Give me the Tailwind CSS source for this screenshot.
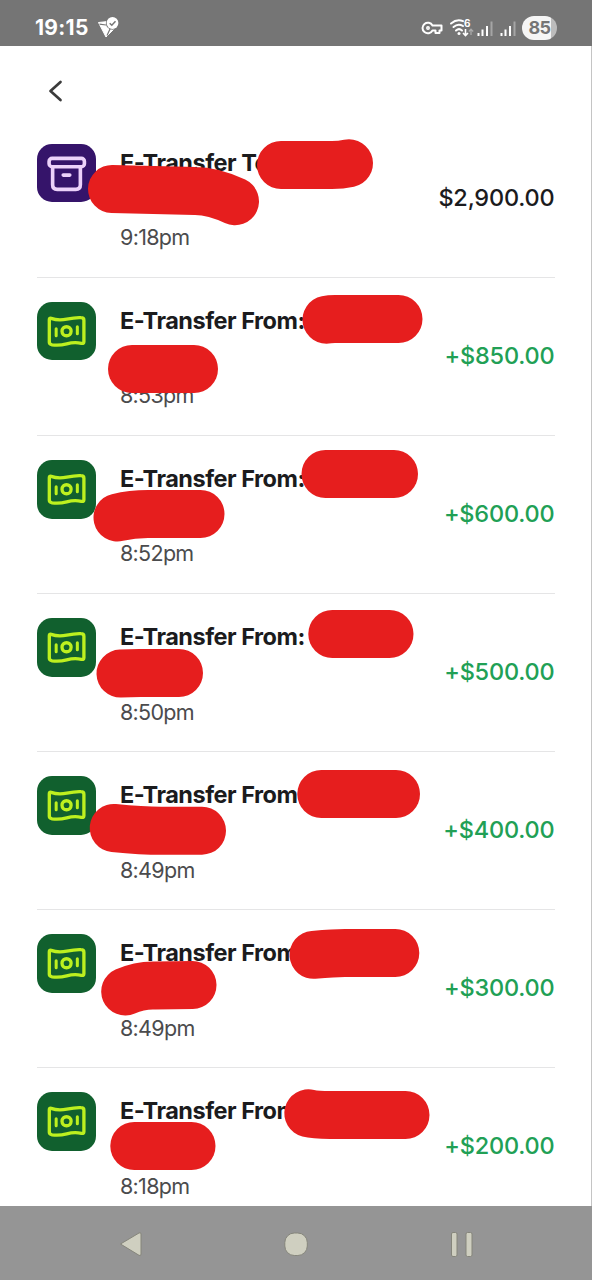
<!DOCTYPE html>
<html lang="en">
<head>
<meta charset="utf-8">
<title>Transactions</title>
<script src="https://cdn.jsdelivr.net/npm/@tailwindcss/browser@4"></script>
</head>
<body class="bg-white">
<svg class="hidden">
  <symbol id="cash" viewBox="0 0 58 58">
    <g fill="none" stroke="#bdf01f" stroke-width="3.3" stroke-linecap="round" stroke-linejoin="round">
      <path d="M14 16.2Q21 18.8 29.500 17T43.500 15.500Q46.500 15.500 46.500 18V39.500Q46.500 41.500 44 41Q37 39.500 29.500 41.500T15 42.500Q12.200 42 12.200 40V17.500Q12.200 15.600 14 16.200Z"/>
      <circle cx="29.300" cy="29" r="4.500"/>
      <path d="M19 26.500V33.500M40 24.500V31.500" stroke-width="3"/>
    </g>
  </symbol>
</svg>
<div class="relative flex h-[1280px] w-[592px] flex-col overflow-hidden bg-white font-[Inter,sans-serif]">
  <header class="flex h-[46px] shrink-0 items-center justify-between bg-[#757575] pt-[9px] pr-[35px] pb-0 pl-[35px]">
    <div class="flex items-center gap-[9px]">
      <span class="w-[53px] text-[21px] leading-[26px] font-bold tracking-[0.3px] whitespace-nowrap text-white">19:15</span>
      <svg class="h-[24px] w-[24px]" viewBox="0 0 24 24">
        <path d="M1.500 6.500L11 5.500L17 13L9 21Z" fill="#fff" stroke="#fff" stroke-width="1" stroke-linejoin="round"/>
        <path d="M2.500 8.200L9 9M10 19.500L13.500 12" fill="none" stroke="#757575" stroke-width="1.200"/>
        <circle cx="15.500" cy="7" r="6.700" fill="#757575"/>
        <circle cx="15.500" cy="7" r="5.900" fill="#fff"/>
        <path d="M12.700 7.200L14.800 9.200L18.500 5.300" fill="none" stroke="#757575" stroke-width="1.500"/>
      </svg>
    </div>
    <div class="flex items-center">
      <svg class="h-[26px] w-[102px]" viewBox="0 0 102 26">
        <g fill="none" stroke="#fff" stroke-width="2">
          <path d="M11.500 10.500A5.300 5.300 0 1 0 11.500 15.500H14.500V18H18.500V15.500H20.500V10.500Z" stroke-linejoin="round"/>
          <circle cx="7" cy="13" r="1.200" stroke-width="1.500"/>
          <g stroke-linecap="round">
            <path d="M30 8.500Q36 3.500 42 6.200M32.500 12Q37 8 42 11M35 15.500Q38 12.800 41 15.500"/>
          </g>
          <path d="M44.500 14V20M42 18L44.500 20.500L47 18" stroke-width="1.600"/>
          <path d="M50 20V14.500M47.800 16.500L50 14.200L52.200 16.500" stroke="#aaa" stroke-width="1.300"/>
        </g>
        <circle cx="38" cy="18.500" r="1.500" fill="#fff"/>
        <text x="43" y="11.500" font-size="10" font-weight="700" fill="#fff">6</text>
        <g fill="#fff">
          <path d="M56.500 18h2v3h-2zM60.500 14.500h2v6.500h-2zM65 11h2v10h-2zM79.500 18h2v3h-2zM83.500 14.500h2v6.500h-2zM88 11h2v10h-2z"/>
          <path d="M69.500 6.500h2v14.500h-2zM92.500 6.500h2v14.500h-2z" fill="#a5a5a5"/>
        </g>
      </svg>
      <div class="-ml-px flex h-[24px] w-[35px] items-center justify-center rounded-full bg-linear-to-r from-[#f5f5f5] from-84% to-[#bcbcbc] to-84% text-[18px] font-bold tracking-[-0.5px] text-[#757575]">85</div>
    </div>
  </header>

  <nav class="flex h-[73.600px] shrink-0 items-start px-[46px] pt-[33px]">
    <svg class="h-[24px] w-[20px]" viewBox="0 0 20 24"><path d="M14.500 3L4.500 12L14.500 21" fill="none" stroke="#3b3b3b" stroke-width="2.700" stroke-linecap="round" stroke-linejoin="round"/></svg>
  </nav>

  <main id="list" class="h-[1087px] shrink-0 overflow-hidden px-[37px]"></main>

  <svg class="absolute inset-0 h-[1280px] w-[592px]" viewBox="0 0 592 1280" fill="none" stroke="#e61e1e" stroke-width="48" stroke-linecap="round" stroke-linejoin="round">
    <path d="M281 165H332Q341 165 349 163.300"/>
    <path d="M112 189L195 191Q213 191 235 201.300"/>
    <path d="M326.500 319.700Q330 319 335 319H398.500"/>
    <path d="M132 369H194"/>
    <path d="M325.500 474H394"/>
    <path d="M117.500 517.500Q132 514 148 514H200.500"/>
    <path d="M332.300 634H389.500"/>
    <path d="M120.500 673.600L140 673H179"/>
    <path d="M321.300 794H396"/>
    <path d="M113.700 828Q145 831 165 830.700H202"/>
    <path d="M313.500 954.800Q335 953 345 953H395.300"/>
    <path d="M125.200 991.500Q140 985 155 985.500L192.500 985"/>
    <path d="M308.300 1113.300Q315 1115 330 1115H405.500"/>
    <path d="M134.300 1146H191.500"/>
  </svg>

  <footer class="absolute bottom-0 left-0 h-[74px] w-[592px] bg-[#959595]">
    <svg class="h-[74px] w-[592px]" viewBox="0 0 592 74" fill="#cfcfc0" stroke="#85857b" stroke-width="1" stroke-linejoin="round">
      <path d="M120.500 38L139 27Q141 26 141 28V48Q141 50.500 139 49.300Z"/>
      <rect x="284.800" y="27" width="22.500" height="22.500" rx="9.500"/>
      <rect x="451.500" y="26.500" width="5.500" height="24" rx="1.500"/>
      <rect x="466" y="26.500" width="6" height="24" rx="1.500"/>
    </svg>
  </footer>
  <div class="absolute top-[46px] right-0 h-[1160px] w-px bg-[#c4c4c4]"></div>
</div>

<template id="row">
  <section class="flex h-[158.100px] border-b border-[#e5e5e6] pt-[24.300px]">
    <div class="icon h-[58.500px] w-[58.500px] shrink-0 overflow-hidden rounded-[15px] bg-[#11602e]"><svg class="h-full w-full"><use href="#cash"/></svg></div>
    <div class="ml-[24.500px] flex-1">
      <h2 class="title h-[75.400px] text-[23.500px] leading-[37.500px] font-bold tracking-[-0.480px] whitespace-nowrap text-[#1b1b1d]"></h2>
      <p class="time text-[21.500px] leading-[37.500px] tracking-[-0.700px] text-[#4b4b4d]"></p>
    </div>
    <div class="amount flex h-[58px] items-end pr-[0.500px] text-[23.500px] leading-[8px] font-medium tracking-[-0.200px]"></div>
  </section>
</template>
<script>
const rows = [
  ['E-Transfer To:', '9:18pm', '$2,900.00'],
  ['E-Transfer From:', '8:53pm', '+$850.00'],
  ['E-Transfer From:', '8:52pm', '+$600.00'],
  ['E-Transfer From:', '8:50pm', '+$500.00'],
  ['E-Transfer From:', '8:49pm', '+$400.00'],
  ['E-Transfer From:', '8:49pm', '+$300.00'],
  ['E-Transfer From:', '8:18pm', '+$200.00'],
];
const list = document.getElementById('list');
rows.forEach(([title, time, amount], i) => {
  const n = document.getElementById('row').content.cloneNode(true);
  n.querySelector('.title').textContent = title;
  n.querySelector('.time').textContent = time;
  const a = n.querySelector('.amount');
  a.textContent = amount;
  a.classList.add(i ? 'text-[#21a055]' : 'text-[#1b1b1d]');
  if (!i) {
    const icon = n.querySelector('.icon');
    icon.classList.replace('bg-[#11602e]', 'bg-[#35146a]');
    icon.innerHTML = '<svg class="h-full w-full" viewBox="0 0 58 58" fill="none" stroke="#ecd2fa" stroke-width="3.600" stroke-linecap="round" stroke-linejoin="round"><rect x="12" y="14.300" width="35" height="8.200" rx="3"/><path d="M15.500 23V40.500Q15.500 45 20 45H38.500Q43 45 43 40.500V23M26 30.800H32.500"/></svg>';
  }
  list.append(n);
});
</script>
</body>
</html>
